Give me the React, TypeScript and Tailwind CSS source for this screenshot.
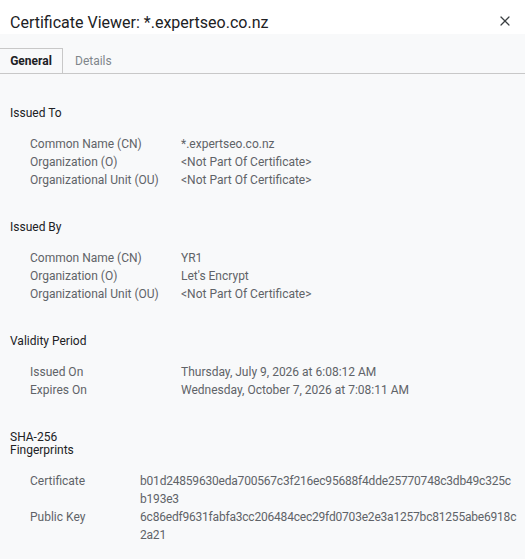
import { X } from "lucide-react";

type Row = { label: string; value: React.ReactNode };

function Section({
  title,
  rows,
  valueCol = "grid-cols-[151px_1fr]",
}: {
  title: React.ReactNode;
  rows: Row[];
  valueCol?: string;
}) {
  return (
    <div>
      <div className="text-[12px] leading-[18px] text-[#202124]">{title}</div>
      <div className={`grid ${valueCol} mt-[13px] pl-5 text-[12px] leading-[18px] text-[#5f6368]`}>
        {rows.map((r) => (
          <div key={r.label} className="contents">
            <div>{r.label}</div>
            <div>{r.value}</div>
          </div>
        ))}
      </div>
    </div>
  );
}

export default function App() {
  return (
    <div
      className="w-[525px] h-[559px] flex flex-col bg-[#f8f9fa] overflow-hidden"
      style={{ fontFamily: "Roboto, 'Liberation Sans', sans-serif" }}
    >
      <div className="h-[34px] bg-white flex items-center justify-between pl-[10px] pr-[12px]">
        <h1 className="text-[16px] text-[#202124] mt-[12px]">Certificate Viewer: *.expertseo.co.nz</h1>
        <X className="w-[16px] h-[16px] text-[#3c4043] mt-[8px]" strokeWidth={1.8} />
      </div>

      <div className="mt-[14px] flex border-b border-[#c8c8c8] text-[12px]">
        <div className="w-[63px] h-[25px] flex items-center justify-center border border-b-0 border-[#c8c8c8] border-l-0 font-bold text-[#202124] -mb-px bg-[#f8f9fa]">
          General
        </div>
        <div className="px-3 h-[25px] flex items-center text-[#80868b]">Details</div>
      </div>

      <div className="px-[10px] pt-[30px] flex flex-col gap-[29px]">
        <Section
          title="Issued To"
          rows={[
            { label: "Common Name (CN)", value: "*.expertseo.co.nz" },
            { label: "Organization (O)", value: "<Not Part Of Certificate>" },
            { label: "Organizational Unit (OU)", value: "<Not Part Of Certificate>" },
          ]}
        />
        <Section
          title="Issued By"
          rows={[
            { label: "Common Name (CN)", value: "YR1" },
            { label: "Organization (O)", value: "Let's Encrypt" },
            { label: "Organizational Unit (OU)", value: "<Not Part Of Certificate>" },
          ]}
        />
        <Section
          title="Validity Period"
          rows={[
            { label: "Issued On", value: "Thursday, July 9, 2026 at 6:08:12 AM" },
            { label: "Expires On", value: "Wednesday, October 7, 2026 at 7:08:11 AM" },
          ]}
        />
        <div className="mt-[3px]">
          <div className="text-[12px] leading-[13px] text-[#202124]">
            SHA-256
            <br />
            Fingerprints
          </div>
          <div className="grid grid-cols-[110px_1fr] mt-[15px] pl-5 text-[12px] leading-[18px] text-[#5f6368]">
            <div>Certificate</div>
            <div className="tracking-[-0.2px]">
              b01d24859630eda700567c3f216ec95688f4dde25770748c3db49c325c
              <br />
              b193e3
            </div>
            <div>Public Key</div>
            <div className="tracking-[-0.2px]">
              6c86edf9631fabfa3cc206484cec29fd0703e2e3a1257bc81255abe6918c
              <br />
              2a21
            </div>
          </div>
        </div>
      </div>
    </div>
  );
}
